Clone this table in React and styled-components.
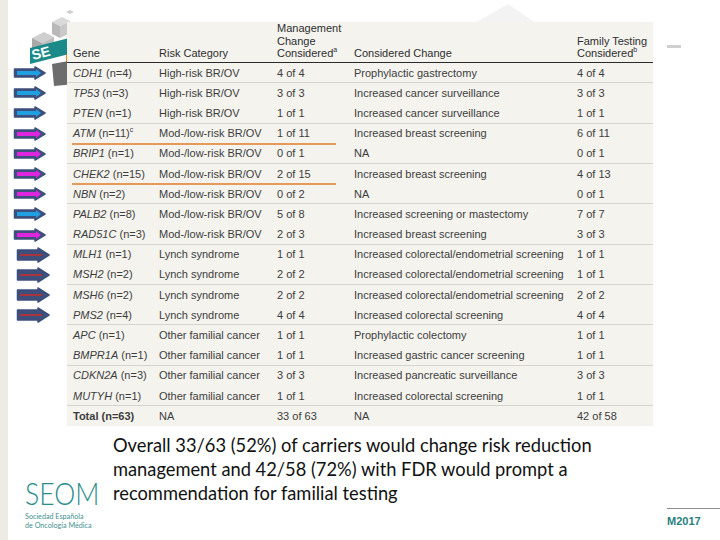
import styled, { createGlobalStyle } from "styled-components";

const GlobalStyle = createGlobalStyle`
  html, body { margin: 0; padding: 0; background: #ffffff; }
  body { font-family: "Liberation Sans", Arial, sans-serif; }
`;

const ROWS = [
  { gene: "CDH1", n: "(n=4)", risk: "High-risk BR/OV", mgmt: "4 of 4", change: "Prophylactic gastrectomy", family: "4 of 4", arrow: "blue" },
  { gene: "TP53", n: "(n=3)", risk: "High-risk BR/OV", mgmt: "3 of 3", change: "Increased cancer surveillance", family: "3 of 3", arrow: "blue" },
  { gene: "PTEN", n: "(n=1)", risk: "High-risk BR/OV", mgmt: "1 of 1", change: "Increased cancer surveillance", family: "1 of 1", arrow: "blue" },
  { gene: "ATM", n: "(n=11)", sup: "c", risk: "Mod-/low-risk BR/OV", mgmt: "1 of 11", change: "Increased breast screening", family: "6 of 11", arrow: "magenta", mark: true },
  { gene: "BRIP1", n: "(n=1)", risk: "Mod-/low-risk BR/OV", mgmt: "0 of 1", change: "NA", family: "0 of 1", arrow: "magenta" },
  { gene: "CHEK2", n: "(n=15)", risk: "Mod-/low-risk BR/OV", mgmt: "2 of 15", change: "Increased breast screening", family: "4 of 13", arrow: "magenta", mark: true },
  { gene: "NBN", n: "(n=2)", risk: "Mod-/low-risk BR/OV", mgmt: "0 of 2", change: "NA", family: "0 of 1", arrow: "magenta" },
  { gene: "PALB2", n: "(n=8)", risk: "Mod-/low-risk BR/OV", mgmt: "5 of 8", change: "Increased screening or mastectomy", family: "7 of 7", arrow: "blue" },
  { gene: "RAD51C", n: "(n=3)", risk: "Mod-/low-risk BR/OV", mgmt: "2 of 3", change: "Increased breast screening", family: "3 of 3", arrow: "magenta" },
  { gene: "MLH1", n: "(n=1)", risk: "Lynch syndrome", mgmt: "1 of 1", change: "Increased colorectal/endometrial screening", family: "1 of 1", arrow: "red" },
  { gene: "MSH2", n: "(n=2)", risk: "Lynch syndrome", mgmt: "2 of 2", change: "Increased colorectal/endometrial screening", family: "1 of 1", arrow: "red" },
  { gene: "MSH6", n: "(n=2)", risk: "Lynch syndrome", mgmt: "2 of 2", change: "Increased colorectal/endometrial screening", family: "2 of 2", arrow: "red" },
  { gene: "PMS2", n: "(n=4)", risk: "Lynch syndrome", mgmt: "4 of 4", change: "Increased colorectal screening", family: "4 of 4", arrow: "red" },
  { gene: "APC", n: "(n=1)", risk: "Other familial cancer", mgmt: "1 of 1", change: "Prophylactic colectomy", family: "1 of 1" },
  { gene: "BMPR1A", n: "(n=1)", risk: "Other familial cancer", mgmt: "1 of 1", change: "Increased gastric cancer screening", family: "1 of 1" },
  { gene: "CDKN2A", n: "(n=3)", risk: "Other familial cancer", mgmt: "3 of 3", change: "Increased pancreatic surveillance", family: "3 of 3" },
  { gene: "MUTYH", n: "(n=1)", risk: "Other familial cancer", mgmt: "1 of 1", change: "Increased colorectal screening", family: "1 of 1" },
  { total: true, gene: "Total", n: "(n=63)", risk: "NA", mgmt: "33 of 63", change: "NA", family: "42 of 58" },
];

const ARROW_COLORS = { blue: "#1fa0e2", magenta: "#e025e0", red: "#a8353c" };

const Slide = styled.div`
  position: relative;
  width: 720px;
  height: 540px;
  overflow: hidden;
  background: #ffffff;
  border-left: 8px solid #ecece5;
  box-sizing: border-box;
`;

const Decor = styled.svg`
  position: absolute;
  left: ${(p) => p.$x}px;
  top: ${(p) => p.$y}px;
`;

const Main = styled.div`
  position: relative;
  display: flex;
  padding-top: 22px;
`;

const ArrowColumn = styled.div`
  width: 59px;
  padding-top: 41px;
  display: flex;
  flex-direction: column;
`;

const ArrowSlot = styled.div`
  height: 20.2px;
  display: flex;
  align-items: center;
  padding-left: ${(p) => (p.$color === "red" ? 8 : 5)}px;
`;

const Table = styled.div`
  width: 586px;
  background: #f4f3ee;
  color: #3d3d3d;
  font-size: 11px;
`;

const Row = styled.div`
  display: grid;
  grid-template-columns: 86px 118px 77px 223px 76px;
  padding-left: 6px;
  height: ${(p) => (p.$head ? "41px" : "20.2px")};
  align-items: ${(p) => (p.$head ? "end" : "center")};
  box-sizing: border-box;
  position: relative;
  border-bottom: 1px solid ${(p) => (p.$head ? "#2b2b2b" : p.$line ? "#d6d5cd" : "transparent")};
  padding-bottom: ${(p) => (p.$head ? "3px" : "0")};
`;

const HeadCell = styled.div`
  color: #2e2e2e;
  line-height: 12.5px;
`;

const GeneCell = styled.div`
  font-weight: ${(p) => (p.$total ? 700 : 400)};
`;

const Gene = styled.span`
  font-style: ${(p) => (p.$total ? "normal" : "italic")};
`;

const Sup = styled.sup`
  font-size: 7px;
  line-height: 0;
`;

const Mark = styled.div`
  position: absolute;
  left: 5px;
  bottom: -2px;
  width: 264px;
  height: 2px;
  background: #e59a5c;
`;

const Bottom = styled.div`
  display: flex;
  align-items: flex-start;
  padding-top: 7px;
`;

const Logo = styled.div`
  width: 88px;
  margin-left: 17px;
  margin-top: 40px;
  color: #2a8c8c;
  font-family: "Lato", "Liberation Sans", sans-serif;
`;

const LogoWord = styled.div`
  font-size: 32px;
  font-weight: 300;
  line-height: normal;
  transform: scaleX(0.83);
  transform-origin: left center;
`;

const LogoSub = styled.div`
  font-size: 7.2px;
  line-height: 9px;
  color: #3f8f8f;
  white-space: nowrap;
`;

const Caption = styled.p`
  margin: 0;
  width: 554px;
  font-family: "Lato", "Liberation Sans", sans-serif;
  font-size: 18.3px;
  line-height: 24px;
  color: #111111;
`;

const Badge = styled.div`
  margin-top: 75px;
  width: 53px;
  border-top: 1px solid #8c8c8c;
  padding-top: 6px;
  font-size: 11px;
  font-weight: 700;
  color: #2a8080;
`;

const Arrow = ({ color }) => {
  const big = color === "red";
  const w = big ? 34 : 33;
  const h = big ? 16 : 14;
  const m = h / 2;
  const bodyTop = 3;
  const headX = w - (big ? 12 : 11);
  const outer = `1.5,${bodyTop} ${headX},${bodyTop} ${headX},1 ${w - 1},${m} ${headX},${h - 1} ${headX},${h - bodyTop} 1.5,${h - bodyTop}`;
  const inner = big
    ? `4,${m - 1} ${headX + 4},${m - 1} ${headX + 4},${m + 1} 4,${m + 1}`
    : `4,${m - 2} ${headX + 1},${m - 2} ${headX + 1},${m - 4} ${w - 5},${m} ${headX + 1},${m + 4} ${headX + 1},${m + 2} 4,${m + 2}`;
  return (
    <svg width={w} height={h} viewBox={`0 0 ${w} ${h}`}>
      <polygon points={outer} fill="#3e4f7b" stroke="#3e4f7b" strokeWidth="1.5" strokeLinejoin="round" />
      <polygon points={inner} fill={ARROW_COLORS[color]} />
    </svg>
  );
};

const LogoCubes = () => (
  <Decor $x={14} $y={8} width="62" height="80" viewBox="0 0 62 80">
    <polygon points="30,14 40,9 48,13 38,18" fill="#d9d9d9" />
    <polygon points="30,14 38,18 38,30 30,26" fill="#b9b9b9" />
    <polygon points="38,18 48,13 48,25 38,30" fill="#c9c9c9" />
    <polygon points="10,30 22,24 32,29 20,35" fill="#cfcfcf" />
    <polygon points="10,30 20,35 20,46 10,41" fill="#a9a9a9" />
    <polygon points="20,35 32,29 32,40 20,46" fill="#bdbdbd" />
    <polygon points="44,4 48,2 52,4 48,6" fill="#cfcfcf" />
    <polygon points="44,40 56,36 56,54 44,58" fill="#e28b22" />
    <polygon points="30,56 52,52 54,76 32,78" fill="#6d6d6d" />
    <polygon points="8,40 55,28 55,44 8,56" fill="#1d8a8a" />
    <text x="11" y="52" fontFamily="Liberation Sans, sans-serif" fontSize="14" fontWeight="700" fill="#ffffff" transform="rotate(-14 11 52)">SE</text>
  </Decor>
);

export default function App() {
  return (
    <>
      <GlobalStyle />
      <Slide>
        <LogoCubes />
        <Decor $x={462} $y={0} width="70" height="26" viewBox="0 0 70 26">
          <polygon points="0,26 38,4 70,26" fill="#f3f3f3" />
        </Decor>
        <Decor $x={659} $y={45} width="14" height="4" viewBox="0 0 14 4">
          <rect x="0" y="0" width="14" height="3" fill="#cfcfcf" />
        </Decor>
        <Main>
          <ArrowColumn>
            {ROWS.map((r, i) => (
              <ArrowSlot key={i} $color={r.arrow}>
                {r.arrow && <Arrow color={r.arrow} />}
              </ArrowSlot>
            ))}
          </ArrowColumn>
          <Table>
            <Row $head>
              <HeadCell>Gene</HeadCell>
              <HeadCell>Risk Category</HeadCell>
              <HeadCell>
                Management
                <br />
                Change
                <br />
                Considered<Sup>a</Sup>
              </HeadCell>
              <HeadCell>Considered Change</HeadCell>
              <HeadCell>
                Family Testing
                <br />
                Considered<Sup>b</Sup>
              </HeadCell>
            </Row>
            {ROWS.map((r, i) => (
              <Row key={r.gene} $line={i < ROWS.length - 1 && i % 2 === 0}>
                <GeneCell $total={r.total}>
                  <Gene $total={r.total}>{r.gene}</Gene> {r.n}
                  {r.sup && <Sup>{r.sup}</Sup>}
                </GeneCell>
                <div>{r.risk}</div>
                <div>{r.mgmt}</div>
                <div>{r.change}</div>
                <div>{r.family}</div>
                {r.mark && <Mark />}
              </Row>
            ))}
          </Table>
        </Main>
        <Bottom>
          <Logo>
            <LogoWord>SEOM</LogoWord>
            <LogoSub>Sociedad Española</LogoSub>
            <LogoSub>de Oncología Médica</LogoSub>
          </Logo>
          <Caption>
            Overall 33/63 (52%) of carriers would change risk reduction
            <br />
            management and 42/58 (72%) with FDR would prompt a
            <br />
            recommendation for familial testing
          </Caption>
          <Badge>M2017</Badge>
        </Bottom>
      </Slide>
    </>
  );
}
